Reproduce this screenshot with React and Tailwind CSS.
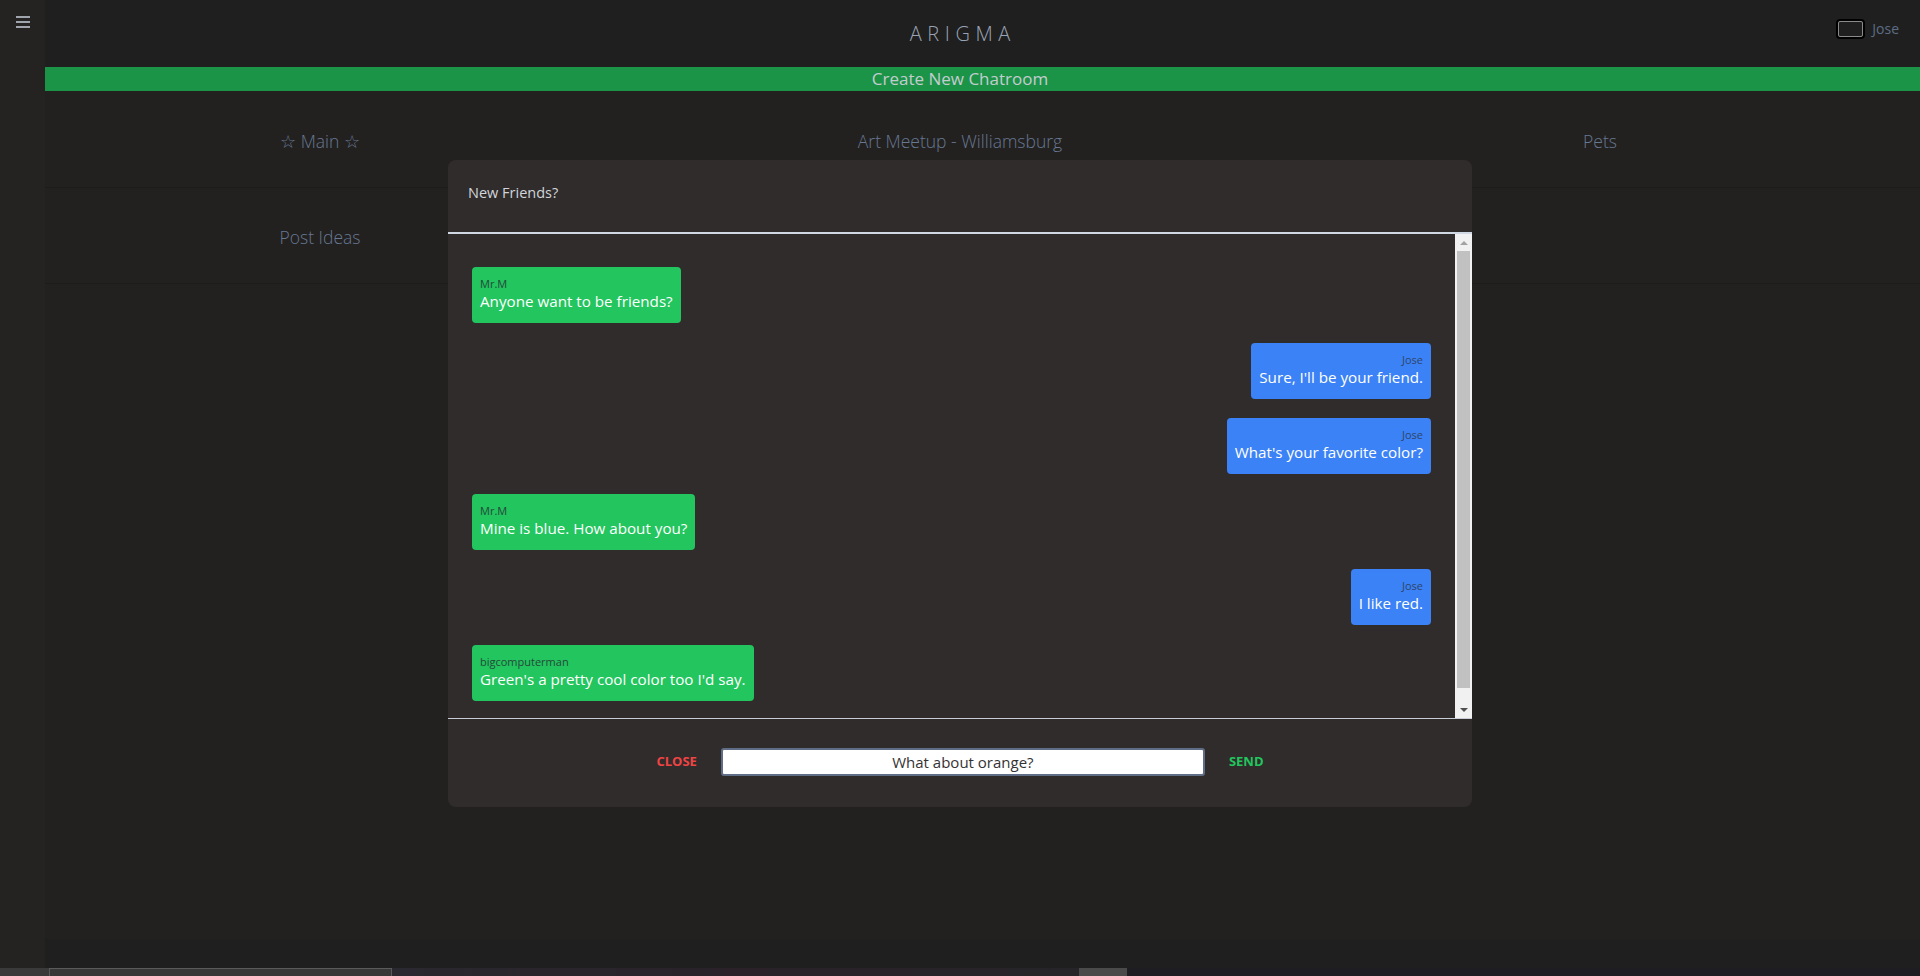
import React from 'react';

const rooms = [
  ['☆ Main ☆', 'Art Meetup - Williamsburg', 'Pets'],
  ['Post Ideas', '', ''],
];

const messages = [
  { user: 'Mr.M', text: 'Anyone want to be friends?', mine: false },
  { user: 'Jose', text: "Sure, I'll be your friend.", mine: true },
  { user: 'Jose', text: "What's your favorite color?", mine: true },
  { user: 'Mr.M', text: 'Mine is blue. How about you?', mine: false },
  { user: 'Jose', text: 'I like red.', mine: true },
  { user: 'bigcomputerman', text: "Green's a pretty cool color too I'd say.", mine: false },
];

function Bubble({ msg }) {
  return (
    <div
      className={[
        'rounded-[4px] px-[8px] pt-[9px] pb-[11px]',
        msg.mine ? 'self-end bg-[#3b82f6] text-right' : 'self-start bg-[#22c55e] text-left',
      ].join(' ')}
    >
      <div className={['text-[11px] leading-[15px]', msg.mine ? 'text-[#2f456a]' : 'text-[#25493a]'].join(' ')}>
        {msg.user}
      </div>
      <div className="text-[15.2px] leading-[21px] text-white">{msg.text}</div>
    </div>
  );
}

function Scrollbar() {
  return (
    <div className="flex w-[17px] flex-col bg-[#f1f1f1]">
      <div className="flex h-[17px] items-center justify-center">
        <div className="h-0 w-0 border-x-[4px] border-b-[4px] border-x-transparent border-b-[#a3a3a3]" />
      </div>
      <div className="mx-[2px] h-[437px] bg-[#c1c1c1]" />
      <div className="flex-1" />
      <div className="flex h-[17px] items-center justify-center">
        <div className="h-0 w-0 border-x-[4px] border-t-[4px] border-x-transparent border-t-[#505050]" />
      </div>
    </div>
  );
}

function ChatModal() {
  return (
    <div className="absolute left-[448px] top-[160px] flex h-[647px] w-[1024px] flex-col overflow-hidden rounded-[8px] bg-[#302c2b] font-['Open_Sans',sans-serif]">
      <div className="flex h-[74px] items-center border-b-2 border-[#cfd8e3] px-[20px] pb-[6px] text-[14.5px] text-[#d1d5db]">
        New Friends?
      </div>
      <div className="flex h-[484px]">
        <div className="flex flex-1 flex-col gap-[19.5px] px-[24px] pt-[33px]">
          {messages.map((m, i) => (
            <Bubble key={i} msg={m} />
          ))}
        </div>
        <Scrollbar />
      </div>
      <div className="h-px bg-[#c8ccd4]" />
      <div className="flex flex-1 items-center justify-center gap-[24px] pb-[2px]">
        <button type="button" className="text-[13px] font-bold text-[#ef4444]">CLOSE</button>
        <input
          type="text"
          defaultValue="What about orange?"
          className="h-[28px] w-[484px] rounded-[3px] border-2 border-[#5f6d86] bg-white text-center text-[15px] text-[#333] outline-none"
        />
        <button type="button" className="text-[13px] font-bold text-[#22c55e]">SEND</button>
      </div>
    </div>
  );
}

export default function App() {
  return (
    <div className="relative h-[976px] w-[1920px] overflow-hidden bg-[#232120] font-['Open_Sans',sans-serif]">
      <header className="grid h-[67px] grid-cols-[1fr_auto_1fr] bg-[#1f1f1f]">
        <div />
        <div className="flex items-center pl-[0.28em] text-[20px] font-light tracking-[0.28em] text-[#9aa3b5]">
          ARIGMA
        </div>
        <div className="flex items-start justify-end gap-[7px] pr-[21px] pt-[19px]">
          <div className="h-[20px] w-[29px] rounded-[4px] border-2 border-black">
            <div className="h-full w-full rounded-[2px] border border-[#8a8a8a]" />
          </div>
          <span className="text-[14px] leading-[19px] text-[#5d6d85]">Jose</span>
        </div>
      </header>

      <div className="flex h-[24px] items-center justify-center bg-[#1b9447] text-[17px] text-[#c4ccd0]">
        Create New Chatroom
      </div>

      <main className="h-[848px]">
        {rooms.map((row, r) => (
          <div
            key={r}
            className={['grid grid-cols-3 border-b border-[#1d1c1b]', r === 0 ? 'h-[97px]' : 'h-[96px]'].join(' ')}
          >
            {row.map((name, c) => (
              <div key={c} className="flex items-center justify-center pt-[4px] text-[17.5px] font-light text-[#667892]">
                {name}
              </div>
            ))}
          </div>
        ))}
      </main>

      <footer className="h-[29px] bg-[#1f1f1f]" />

      <div className="flex h-[8px] bg-[#1c1b20]">
        <div className="w-[49px] bg-[#3a3a3a]" />
        <div className="w-[343px] border-t border-x border-[#5a5a5a] bg-[#383838]" />
        <div className="w-[687px] bg-gradient-to-r from-[#2a2830] via-[#2a2129] to-[#262428]" />
        <div className="w-[48px] bg-[#4a4a4a]" />
        <div className="flex-1 bg-[#1e1e22]" />
      </div>

      <aside className="absolute left-0 top-0 h-[968px] w-[45px] bg-[#242322] px-[16px] pt-[16px]">
        <div className="flex w-[14px] flex-col gap-[3px]">
          <div className="h-[2px] bg-[#a0a4ac]" />
          <div className="h-[2px] bg-[#a0a4ac]" />
          <div className="h-[2px] bg-[#a0a4ac]" />
        </div>
      </aside>

      <ChatModal />
    </div>
  );
}
